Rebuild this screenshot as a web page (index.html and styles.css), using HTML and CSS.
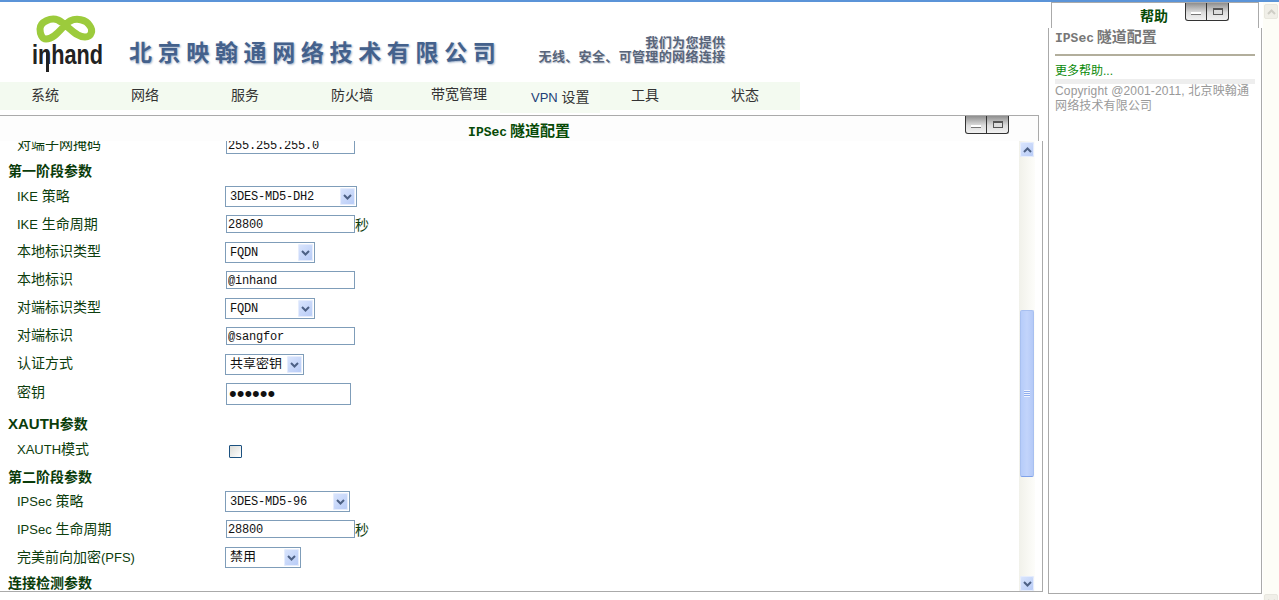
FILE: index.html
```html
<!DOCTYPE html>
<html lang="zh-CN">
<head>
<meta charset="utf-8">
<title>IPSec 隧道配置</title>
<link rel="stylesheet" href="styles.css">
</head>
<body>
<div class="page">
  <div class="left">
    <header class="banner">
      <svg class="logo" width="80" height="62" viewBox="0 0 80 62" aria-label="inhand">
        <path class="logo-loop" d="M9 13C9 6 20 1 27 4C37 9 44 21 54 21C61 21 62 14 59 10C55 3 45 2 39 5C31 10 25 23 15 23C11 23 9 18 9 13Z"/>
        <rect class="logo-stem" x="15" y="36" width="3" height="20"/>
        <text class="logo-text" x="1" y="48" textLength="71" lengthAdjust="spacingAndGlyphs">inhand</text>
      </svg>
      <div class="company">北京映翰通网络技术有限公司</div>
      <div class="slogan">
        <div>我们为您提供</div>
        <div>无线、安全、可管理的网络连接</div>
      </div>
    </header>
    <nav class="nav">
      <a class="nav-item">系统</a>
      <a class="nav-item">网络</a>
      <a class="nav-item">服务</a>
      <a class="nav-item">防火墙</a>
      <a class="nav-item nav-up">带宽管理</a>
      <a class="nav-item active"><span class="nav-lat">VPN</span> 设置</a>
      <a class="nav-item">工具</a>
      <a class="nav-item">状态</a>
    </nav>
    <section class="panel">
      <div class="panel-head">
        <h1 class="panel-title"><span class="mono">IPSec </span>隧道配置</h1>
        <div class="winbtns main-btns">
          <span class="winbtn"><i class="ico-min"></i></span><span class="winbtn"><i class="ico-max"></i></span>
        </div>
      </div>
      <div class="panel-body">
        <div class="scrollview">
          <form class="form">
            <div class="row row-input"><label>对端子网掩码</label><input class="text" value="255.255.255.0"></div>
            <div class="heading heading-first">第一阶段参数</div>
            <div class="row row-select"><label><span class="lat">IKE</span> 策略</label>
              <div class="sel w132"><select><option>3DES-MD5-DH2</option></select><span class="arrow"><svg width="9" height="6" viewBox="0 0 9 6"><path d="M1 1l3.5 3.5L8 1"/></svg></span></div></div>
            <div class="row row-input"><label><span class="lat">IKE</span> 生命周期</label><input class="text" value="28800"><span class="unit">秒</span></div>
            <div class="row row-select"><label>本地标识类型</label>
              <div class="sel w90"><select><option>FQDN</option></select><span class="arrow"><svg width="9" height="6" viewBox="0 0 9 6"><path d="M1 1l3.5 3.5L8 1"/></svg></span></div></div>
            <div class="row row-input"><label>本地标识</label><input class="text" value="@inhand"></div>
            <div class="row row-select"><label>对端标识类型</label>
              <div class="sel w90"><select><option>FQDN</option></select><span class="arrow"><svg width="9" height="6" viewBox="0 0 9 6"><path d="M1 1l3.5 3.5L8 1"/></svg></span></div></div>
            <div class="row row-input"><label>对端标识</label><input class="text" value="@sangfor"></div>
            <div class="row row-select"><label>认证方式</label>
              <div class="sel w79"><select class="cjk"><option>共享密钥</option></select><span class="arrow"><svg width="9" height="6" viewBox="0 0 9 6"><path d="M1 1l3.5 3.5L8 1"/></svg></span></div></div>
            <div class="row row-pwd"><label>密钥</label><input class="text pwd" type="password" value="123456"></div>
            <div class="heading heading-x"><span class="lat-b">XAUTH</span>参数</div>
            <div class="row row-check"><label><span class="lat">XAUTH</span>模式</label><input class="check" type="checkbox"></div>
            <div class="heading heading-tight">第二阶段参数</div>
            <div class="row row-select"><label><span class="lat">IPSec</span> 策略</label>
              <div class="sel w125"><select><option>3DES-MD5-96</option></select><span class="arrow"><svg width="9" height="6" viewBox="0 0 9 6"><path d="M1 1l3.5 3.5L8 1"/></svg></span></div></div>
            <div class="row row-input"><label><span class="lat">IPSec</span> 生命周期</label><input class="text" value="28800"><span class="unit">秒</span></div>
            <div class="row row-select"><label>完美前向加密<span class="lat">(PFS)</span></label>
              <div class="sel w76"><select class="cjk"><option>禁用</option></select><span class="arrow"><svg width="9" height="6" viewBox="0 0 9 6"><path d="M1 1l3.5 3.5L8 1"/></svg></span></div></div>
            <div class="heading">连接检测参数</div>
          </form>
        </div>
        <div class="vbar">
          <span class="vbtn"><svg width="9" height="6" viewBox="0 0 9 6"><path d="M1 5l3.5-3.5L8 5"/></svg></span>
          <div class="gap-top"></div>
          <div class="thumb"><span class="grip"></span></div>
          <div class="gap-bottom"></div>
          <span class="vbtn"><svg width="9" height="6" viewBox="0 0 9 6"><path d="M1 1l3.5 3.5L8 1"/></svg></span>
        </div>
      </div>
    </section>
  </div>
  <aside class="help">
    <div class="help-tab">
      <h2 class="help-tab-title">帮助</h2>
      <div class="winbtns help-btns">
        <span class="winbtn"><i class="ico-min"></i></span><span class="winbtn"><i class="ico-max"></i></span>
      </div>
    </div>
    <div class="help-box">
      <h3 class="help-title"><span class="mono">IPSec </span>隧道配置</h3>
      <a class="help-link">更多帮助...</a>
      <div class="help-sep"></div>
      <p class="copy">Copyright @2001-2011, 北京映翰通网络技术有限公司</p>
    </div>
  </aside>
  <div class="pagebar">
    <span class="pbtn"><svg width="9" height="6" viewBox="0 0 9 6"><path d="M1 5l3.5-3.5L8 5"/></svg></span>
    <span class="pbtn pbtn-end"><svg width="9" height="6" viewBox="0 0 9 6"><path d="M1 1l3.5 3.5L8 1"/></svg></span>
  </div>
</div>
</body>
</html>
```
FILE: styles.css
```css
* { box-sizing: border-box; }
html, body { margin: 0; height: 100%; overflow: hidden; background: #fff; }
body {
  font-family: "Liberation Sans", "Noto Sans CJK SC", sans-serif;
  font-size: 14px;
  color: #0d3d0d;
}
.page {
  display: flex;
  height: 600px;
  border-top: 2px solid #5b94d8;
}
.left { width: 1043px; flex: none; display: flex; flex-direction: column; }

/* banner */
.banner { height: 80px; display: flex; align-items: flex-start; width: 800px; }
.logo { margin: 14px 0 0 31px; flex: none; overflow: visible; }
.logo-loop { fill: none; stroke: #9ccb3c; stroke-width: 7; }
.logo-stem { fill: #222; }
.logo-text { font-family: "Liberation Sans", sans-serif; font-size: 27px; font-weight: 700; fill: #222; }
.company {
  margin: 37px 0 0 18px;
  font-weight: 700;
  font-size: 23px;
  line-height: 28px;
  letter-spacing: 5.65px;
  color: #44618c;
  text-shadow: 1px 1px 2px #9fb0c8;
  white-space: nowrap;
}
.slogan {
  margin: 34px 0 0 34px;
  width: 190px;
  text-align: right;
  font-weight: 700;
  font-size: 13px;
  line-height: 14px;
  letter-spacing: .35px;
  color: #59657a;
  text-shadow: 1px 1px 1px #c2cbd8;
  white-space: nowrap;
}

/* nav */
.nav { height: 28px; width: 800px; display: flex; background: #f3faf0; }
.nav-item {
  width: 100px;
  padding-left: 31px;
  line-height: 26px;
  color: #333;
  white-space: nowrap;
}
.nav-up { line-height: 24px; }
.nav-item.active {
  height: 31px;
  line-height: 31px;
  background: #f5fbf2;
  color: #333;
}
.nav-lat { color: #1d3f78; font-size: 13px; }

/* panel */
.panel { margin-top: 5px; flex: 1; display: flex; flex-direction: column; min-height: 0; }
.panel-head {
  position: relative;
  height: 26px;
  width: 1039px;
  flex: none;
  border-top: 1px solid #aaa;
  border-right: 1px solid #aaa;
  background: #fdfdfd;
}
.panel-title {
  margin: 0;
  text-align: center;
  font-size: 15px;
  line-height: 29px;
  font-weight: 700;
  color: #064a06;
}
.mono { font-family: "Liberation Mono", "Noto Sans CJK SC", monospace; font-size: 13px; word-spacing: -5px; }
.winbtns { position: absolute; display: flex; }
.main-btns { top: 0; left: 965px; }
.help-btns { top: 0; left: 133px; }
.winbtn {
  width: 22px;
  height: 18px;
  display: flex;
  align-items: center;
  justify-content: center;
  background: linear-gradient(#8e8e8e, #dcdcdc 55%, #f1f1f1);
  border: 1px solid #333;
  border-top: 0;
}
.winbtn:first-child { border-bottom-left-radius: 3px; }
.winbtn:last-child { border-bottom-right-radius: 3px; border-left: 0; }
.ico-min { width: 10px; height: 3px; background: #fff; border-bottom: 1px solid #777; margin-top: 4px; }
.ico-max { width: 10px; height: 7px; background: #ddd; border: 1px solid #555; border-top-width: 2px; }

.panel-body {
  height: 451px;
  flex: none;
  display: flex;
  border-right: 1px solid #aaa;
  border-bottom: 1px solid #aaa;
  width: 1043px;
}
.scrollview { flex: 1; overflow: hidden; min-width: 0; }
.form { margin-top: -9px; }

.row { display: flex; align-items: center; padding-left: 17px; }
.row label { width: 208px; flex: none; white-space: nowrap; line-height: 16px; padding-bottom: 4px; }
.row-input { height: 27px; padding-top: 4px; padding-bottom: 5px; }
.row-input label { padding-bottom: 2px; }
.row-input label:has(.lat) { padding-bottom: 0; }
.row-select { height: 29px; }
.row-select label:has(.lat) { padding-bottom: 0; }
.row-pwd { height: 30px; }
.row-check { height: 27px; padding-bottom: 3px; }
.lat { font-size: 13px; }
.lat-b { font-size: 15px; }
.heading {
  height: 23px;
  line-height: 23px;
  padding-left: 8px;
  font-weight: 700;
  color: #0a3c0a;
}
.heading-first { line-height: 25px; }
.heading-tight { height: 21px; }
.heading-x { height: 30px; line-height: 30px; }

.text {
  width: 129px;
  height: 18px;
  margin: 0 0 0 1px;
  padding: 1px 1px 0;
  border: 1px solid #7f9db9;
  background: #fff;
  color: #111;
  font: 12px "Liberation Mono", monospace;
  letter-spacing: -.2px;
  outline: 0;
}
.pwd { width: 125px; height: 22px; padding: 0 0 0 2px; font: 22px "Liberation Sans", sans-serif; letter-spacing: 0; }
.unit { color: #0d3d0d; }
.sel {
  display: flex;
  align-items: center;
  height: 21px;
  border: 1px solid #7f9db9;
  padding: 1px;
  background: #fff;
}
.sel select {
  flex: 1;
  min-width: 0;
  height: 17px;
  padding: 0 0 0 3px;
  border: 0;
  background: transparent;
  appearance: none;
  -webkit-appearance: none;
  color: #111;
  font: 12px "Liberation Mono", monospace;
  letter-spacing: -.2px;
}
.sel select.cjk { font: 13px/14px "Noto Sans CJK SC", sans-serif; letter-spacing: 0; padding-bottom: 4px; }
.w132 { width: 132px; }
.w125 { width: 125px; }
.w90 { width: 90px; }
.w79 { width: 79px; }
.w76 { width: 76px; }
.arrow, .vbtn {
  flex: none;
  width: 15px;
  height: 17px;
  display: flex;
  align-items: center;
  justify-content: center;
  background: linear-gradient(135deg, #dbe6fd, #b6caf6);
  border-radius: 2px;
  box-shadow: inset 0 0 0 1px #e6edfd;
}
.arrow path, .vbtn path { fill: none; stroke: #4d6185; stroke-width: 2; }

.check {
  appearance: none;
  -webkit-appearance: none;
  width: 13px;
  height: 13px;
  margin: 0 0 0 4px;
  border: 1px solid #1c5180;
  border-radius: 1px;
  background: linear-gradient(135deg, #dcdcd7, #fff);
}

/* scrollbar */
.vbar {
  width: 16px;
  flex: none;
  margin-right: 7px;
  display: flex;
  flex-direction: column;
  align-items: center;
  background: linear-gradient(90deg, #f1f1ea, #fdfdfa);
  padding-top: 1px;
}
.vbtn { height: 15px; width: 14px; }
.gap-top { height: 153px; flex: none; }
.gap-bottom { flex: 1; }
.thumb {
  width: 14px;
  height: 167px;
  flex: none;
  display: flex;
  align-items: center;
  justify-content: center;
  background: linear-gradient(90deg, #b6ccfa, #c2d4fb 50%, #b4c9f7);
  border: 1px solid #a8c0f0;
  border-bottom-color: #7fa2ea;
  border-radius: 2px;
}
.grip {
  width: 6px;
  height: 7px;
  background: repeating-linear-gradient(#eef3fe 0 1px, #8fadee 1px 2px);
}

/* help */
.help { width: 214px; margin-left: 5px; flex: none; display: flex; flex-direction: column; }
.help-tab {
  position: relative;
  margin-left: 3px;
  width: 208px;
  height: 26px;
  flex: none;
  border: 1px solid #aaa;
  border-bottom: 0;
}
.help-tab-title {
  margin: 0;
  padding-left: 88px;
  font-size: 14px;
  line-height: 26px;
  font-weight: 700;
  color: #064a06;
}
.help-box {
  height: 566px;
  flex: none;
  padding: 0 6px;
  border: 1px solid #aaa;
  border-top: 0;
  background: #fff;
  color: #777;
}
.help-title {
  margin: 0;
  padding: 0 0 6px;
  font-size: 15px;
  line-height: 18px;
  font-weight: 700;
  color: #777;
  border-bottom: 2px solid #b2ae9c;
}
.help-link { display: block; margin-top: 7px; font-size: 12px; line-height: 16px; color: #0a8a0a; }
.help-sep { height: 5px; background: #eee; }
.copy { margin: 0; font-size: 12px; line-height: 15px; letter-spacing: .15px; color: #999; }

/* page scrollbar */
.pagebar {
  flex: 1;
  margin-left: 1px;
  background: #fdfdf7;
  display: flex;
  flex-direction: column;
  justify-content: space-between;
  align-items: center;
  padding-top: 2px;
  min-width: 0;
}
.pbtn {
  width: 14px;
  height: 15px;
  display: flex;
  align-items: center;
  justify-content: center;
  background: #f0efe8;
  border: 1px solid #e8e7df;
  border-radius: 2px;
}
.pbtn-end { margin-bottom: -9px; }
.pbtn path { fill: none; stroke: #cfcec6; stroke-width: 2; }
```
